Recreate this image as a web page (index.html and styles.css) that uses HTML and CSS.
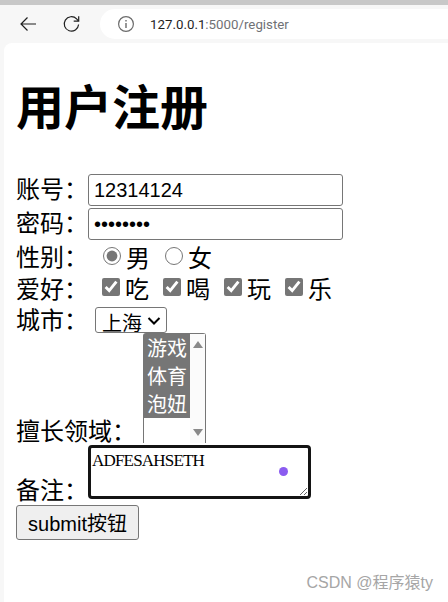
FILE: index.html
```html
<!DOCTYPE html>
<html lang="zh">
<head>
    <meta charset="UTF-8">
    <meta name="viewport" content="width=device-width, initial-scale=1.0">
    <title>用户注册</title>
    <link rel="stylesheet" href="styles.css">
</head>
<body>

    <div class="toolbar">
        <svg class="nav-icon" width="20" height="20" viewBox="0 0 20 20">
            <path d="M18 10H3M9.5 3.5L3 10l6.5 6.5" fill="none" stroke="#1f1f1f" stroke-width="1.2"/>
        </svg>
        <svg class="nav-icon" width="20" height="20" viewBox="0 0 20 20">
            <path d="M16.6 10.5a7.2 7.2 0 1 1-2-5.6l1.8 1.9" fill="none" stroke="#1f1f1f" stroke-width="1.2"/>
            <path d="M16.7 2.2v5h-5" fill="none" stroke="#1f1f1f" stroke-width="1.2"/>
        </svg>
        <div class="address">
            <svg class="info-icon" width="18" height="18" viewBox="0 0 18 18">
                <circle cx="9" cy="9" r="7.4" fill="none" stroke="#6b6b6b" stroke-width="1.2"/>
                <path d="M9 8v5M9 5v1.5" stroke="#6b6b6b" stroke-width="1.4"/>
            </svg>
            <span class="url">127.0.0.1<span class="url-dim">:5000/register</span></span>
        </div>
    </div>

    <div class="page">
        <h1>用户注册</h1>

        <form>
            <div class="row row-text">
                <label>账号：</label>
                <input class="field" type="text" value="12314124">
            </div>
            <div class="row row-text">
                <label>密码：</label>
                <input class="field" type="password" value="12345678">
            </div>
            <div class="row row-gender">
                <label>性别：</label>
                <input type="radio" name="sex" checked><span class="opt">男</span>
                <input type="radio" name="sex"><span class="opt">女</span>
            </div>
            <div class="row row-hobby">
                <label>爱好：</label>
                <input type="checkbox" checked><span class="opt">吃</span>
                <input type="checkbox" checked><span class="opt">喝</span>
                <input type="checkbox" checked><span class="opt">玩</span>
                <input type="checkbox" checked><span class="opt">乐</span>
            </div>
            <div class="row row-city">
                <label>城市：</label>
                <select class="city">
                    <option>上海</option>
                    <option>北京</option>
                </select>
            </div>
            <div class="row row-area">
                <label>擅长领域：</label>
                <div class="listbox">
                    <div class="list-items">
                        <div class="list-item">游戏</div>
                        <div class="list-item">体育</div>
                        <div class="list-item">泡妞</div>
                    </div>
                    <div class="list-scroll">
                        <span class="arrow-up"></span>
                        <span class="arrow-down"></span>
                    </div>
                </div>
            </div>
            <div class="row row-note">
                <label>备注：</label>
                <div class="note-wrap">
                    <textarea class="note">ADFESAHSETH</textarea>
                    <span class="cursor-dot"></span>
                </div>
            </div>
            <button type="submit" class="submit">submit按钮</button>
        </form>

        <div class="watermark">CSDN @程序猿ty</div>
    </div>

</body>
</html>
```

FILE: styles.css
```css
html, body {
    height: 100%;
}

body {
    margin: 0;
    background-color: #f7f7f7;
    border-top: 5px solid #c8c8c8;
    box-sizing: border-box;
    font-family: "Liberation Sans", "Noto Sans CJK SC", sans-serif;
    color: #000;
    overflow: hidden;
    display: flex;
    flex-direction: column;
}

.toolbar {
    height: 38px;
    display: flex;
    align-items: center;
    padding-left: 18px;
    flex-shrink: 0;
}

.nav-icon {
    margin-right: 24px;
}

.toolbar .nav-icon + .nav-icon {
    margin-right: 18px;
}

.address {
    flex: 1;
    height: 30px;
    background: #fff;
    border-radius: 15px 0 0 15px;
    display: flex;
    align-items: center;
    padding-left: 17px;
}

.info-icon {
    margin-right: 15px;
}

.url {
    font-family: "Roboto", "Liberation Sans", sans-serif;
    font-size: 13.3px;
    color: #1f1f1f;
}

.url-dim {
    color: #6f7175;
}

.page {
    flex: 1;
    position: relative;
    margin-left: 4px;
    background: #fff;
    border-radius: 8px 0 0 0;
    padding: 0 12px;
}

h1 {
    font-size: 48px;
    line-height: 64px;
    margin: 34px 0 0;
    font-weight: bold;
}

form {
    margin-top: 33px;
}

label {
    font-size: 24px;
    flex-shrink: 0;
}

.row {
    display: flex;
    align-items: center;
}

.row-text {
    height: 32px;
    margin-bottom: 2px;
}

.row-text label {
    width: 72px;
    margin-bottom: 6px;
}

.field {
    width: 255px;
    height: 32px;
    box-sizing: border-box;
    border: 1px solid #767676;
    border-radius: 3px;
    padding: 1px 5px;
    font-family: "Liberation Sans", sans-serif;
    font-size: 20px;
    outline: none;
}

.row-gender {
    height: 28px;
}

.row-hobby {
    height: 34px;
}

.row-gender label {
    width: 86px;
    margin-bottom: 2px;
}

.row-hobby label {
    width: 85px;
}

.row-gender input,
.row-hobby input {
    width: 18px;
    height: 18px;
    margin: 0 5px 0 1px;
    accent-color: #767676;
}

.opt {
    font-size: 24px;
    margin-right: 13px;
}

.row-gender .opt {
    margin-right: 14px;
}

.row-city {
    height: 26px;
    margin-top: 3px;
}

.row-city label {
    width: 79px;
    margin-bottom: 4px;
}

.city {
    width: 72px;
    height: 26px;
    font-size: 20px;
    font-family: "Noto Sans CJK SC", sans-serif;
    appearance: none;
    background: #fff url("data:image/svg+xml,%3Csvg xmlns='http://www.w3.org/2000/svg' width='14' height='8'%3E%3Cpath d='M1.5 1l5.5 5.5L12.5 1' fill='none' stroke='%23000' stroke-width='2'/%3E%3C/svg%3E") no-repeat 51px 9px;
    border: 1px solid #767676;
    border-radius: 3px;
    padding: 0 0 0 6px;
}

.row-area {
    align-items: flex-end;
    height: 110px;
}

.row-area label {
    width: 127px;
    line-height: 30px;
    margin-bottom: -4px;
}

.listbox {
    width: 63px;
    height: 110px;
    box-sizing: border-box;
    border: 1px solid #767676;
    border-bottom: none;
    border-radius: 3px 3px 0 0;
    display: flex;
    background: #fff;
}

.list-items {
    width: 46px;
}

.list-item {
    background: #767676;
    color: #fff;
    font-size: 20px;
    line-height: 30px;
    height: 28px;
    text-align: center;
    white-space: nowrap;
}

.list-scroll {
    flex: 1;
    background: #fbfbfb;
    display: flex;
    flex-direction: column;
    justify-content: space-between;
    align-items: center;
    padding: 7px 0;
}

.arrow-up {
    border: 5px solid transparent;
    border-top: none;
    border-bottom: 7px solid #8a8a8a;
}

.arrow-down {
    border: 5px solid transparent;
    border-bottom: none;
    border-top: 7px solid #8a8a8a;
}

.row-note {
    align-items: flex-end;
    margin-top: 2px;
}

.row-note label {
    width: 72px;
    line-height: 30px;
    margin-bottom: -7px;
}

.note-wrap {
    position: relative;
    display: flex;
}

.note {
    width: 223px;
    height: 54px;
    box-sizing: border-box;
    border: 3px solid #141414;
    border-radius: 4px;
    padding: 3px 1px 0;
    margin: 0;
    font-family: "Liberation Serif", serif;
    font-size: 17px;
    letter-spacing: -0.8px;
    line-height: 20px;
    outline: none;
}

.cursor-dot {
    position: absolute;
    left: 191px;
    top: 22px;
    width: 9px;
    height: 9px;
    border-radius: 50%;
    background: #8b5cf0;
}

.submit {
    display: block;
    margin-top: 6px;
    width: 123px;
    height: 35px;
    padding: 0;
    background: #efefef;
    border: 1px solid #767676;
    border-radius: 3px;
    font-family: "Liberation Sans", "Noto Sans CJK SC", sans-serif;
    font-size: 20px;
    color: #000;
}

.watermark {
    position: absolute;
    right: 15px;
    bottom: 9px;
    font-size: 16px;
    color: #a6a6a6;
}
```
